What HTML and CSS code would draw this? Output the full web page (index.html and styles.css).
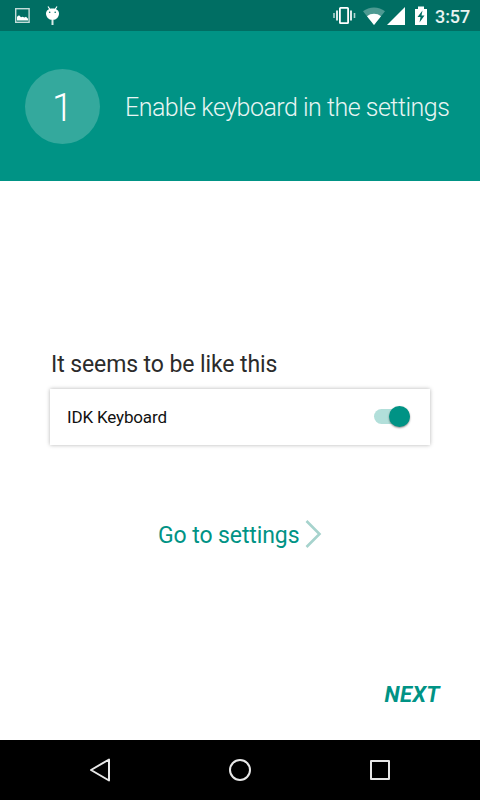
FILE: index.html
```html
<!DOCTYPE html>
<html lang="en">
<head>
<meta charset="utf-8">
<title>IDK Keyboard setup</title>
<link rel="stylesheet" href="styles.css">
</head>
<body>
<div class="screen">
  <div class="status">
    <svg class="status-left" width="60" height="31" viewBox="0 0 60 31">
      <rect x="15.7" y="8.7" width="13.4" height="13.6" fill="none" stroke="#c3dcd9" stroke-width="1.4"/>
      <path d="M17 20.500V16.800l2-1.500 2 2 1.500-.6 2 .8 1.500-.7 2 2v1.700z" fill="#fff"/>
      <path d="M48 6.500l2 3M57 6.500l-2 3" stroke="#fff" stroke-width="1.200"/>
      <path d="M46 13.500c0-3 2.700-5 6.500-5s6.500 2 6.500 5-2.500 6.500-6.500 6.500-6.500-3.500-6.500-6.500z" fill="#fff"/>
      <circle cx="49.700" cy="12.200" r=".8" fill="#006e63"/><circle cx="55.200" cy="12.200" r=".8" fill="#006e63"/>
      <path d="M52.500 20v5" stroke="#d9eae8" stroke-width="2"/>
    </svg>
    <div class="status-right">
      <svg width="98" height="31" viewBox="332 0 98 31">
        <g fill="none" stroke="#fff">
          <rect x="339.900" y="7.900" width="8.200" height="15.200" rx=".7" stroke-width="1.800"/>
          <path d="M337 10.500v10M351 10.500v10" stroke-width="1.700"/>
          <path d="M334 13v5M354.500 13v5" stroke="#b2d4d0" stroke-width="1.600"/>
        </g>
        <path d="M363 11.300C369 6.100 379 6.100 385 11.300L374 25z" fill="#4d9a92"/>
        <path d="M367 16.200c3.800-3.300 10.200-3.300 14 0L374 25z" fill="#fff"/>
        <path d="M405 7v18h-18z" fill="#fff"/>
        <path d="M418 6.500h6V9h3v16h-12V9h3z" fill="#fff"/>
        <path d="M422.500 10.500l-5 6.500h3l-1 5.500 5-7h-3z" fill="#006e63"/>
      </svg>
      <span class="clock">3:57</span>
    </div>
  </div>
  <header class="header">
    <div class="step">1</div>
    <h1 class="title">Enable keyboard in the settings</h1>
  </header>
  <main class="content">
    <p class="hint">It seems to be like this</p>
    <div class="card">
      <span class="name">IDK Keyboard</span>
      <span class="switch"><span class="thumb"></span></span>
    </div>
    <a class="go"><span>Go to settings</span>
      <svg width="18" height="30" viewBox="0 0 18 30"><path d="M1.500 2L14.500 15 1.500 28" fill="none" stroke="#a6d3cd" stroke-width="2.600"/></svg>
    </a>
    <a class="next">NEXT</a>
  </main>
  <nav class="nav">
    <svg width="480" height="60" viewBox="0 0 480 60" fill="none" stroke="#e8e8e8" stroke-width="2" stroke-linejoin="round">
      <path d="M91 30L109 19.500V40.500z"/>
      <circle cx="240" cy="30" r="10"/>
      <rect x="371" y="21" width="18" height="18"/>
    </svg>
  </nav>
</div>
</body>
</html>
```
FILE: styles.css
```css
* { box-sizing: border-box; }
body { margin: 0; background: #fff; font-family: Roboto, sans-serif; }
.screen { width: 480px; height: 800px; display: flex; flex-direction: column; overflow: hidden; }
.status { height: 31px; flex: none; display: flex; justify-content: space-between; background: #006e63; }
.status-right { display: flex; align-items: center; padding-right: 10px; }
.status svg { display: block; }
.clock { width: 35px; margin-left: 5px; padding-top: 2px; font-size: 18px; line-height: 20px; font-weight: 500; letter-spacing: -0.1px; color: #e8f3f1; white-space: nowrap; }
.header { height: 150px; flex: none; display: flex; align-items: center; padding-left: 25px; background: #009385; }
.step { width: 75px; height: 75px; border-radius: 50%; background: #34a99d; color: #fff; font-size: 38px; line-height: 78px; font-weight: 300; text-align: center; }
.title { margin: 3px 0 0 25px; font-size: 25px; line-height: 30px; font-weight: 300; letter-spacing: -0.5px; color: #e8f5f3; white-space: nowrap; }
.content { flex: 1; display: flex; flex-direction: column; padding-top: 169px; }
.hint { margin: 0 0 9px 51px; font-size: 23px; line-height: 30px; letter-spacing: -0.1px; color: #2b2b2b; white-space: nowrap; }
.card { width: 380px; height: 56px; margin-left: 50px; padding: 0 20px 0 17px; display: flex; align-items: center; justify-content: space-between; background: #fff; box-shadow: 0 0 4px rgba(0,0,0,.3); }
.name { font-size: 17px; letter-spacing: -0.16px; color: #111; }
.switch { width: 36px; height: 15px; margin-top: -1px; border-radius: 8px; background: #b2dfda; display: flex; align-items: center; justify-content: flex-end; }
.thumb { width: 21px; height: 21px; flex: none; border-radius: 50%; background: #009385; box-shadow: 0 1px 2px rgba(0,0,0,.45); }
.go { display: flex; align-items: center; margin: 74px 0 0 158px; height: 30px; font-size: 23px; letter-spacing: -0.1px; color: #009385; white-space: nowrap; }
.go span { padding-top: 3px; }
.go svg { margin-left: 6px; }
.next { margin: 133px 40px 0 auto; font-size: 22px; line-height: 26px; font-weight: 700; font-style: italic; letter-spacing: 0.4px; color: #009385; }
.nav { height: 60px; flex: none; background: #000; }
.nav svg { display: block; }
```
